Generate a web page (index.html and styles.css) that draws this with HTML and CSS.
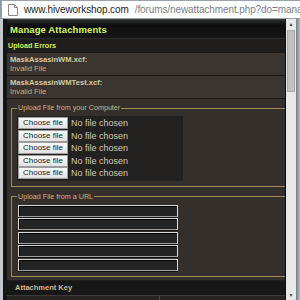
FILE: index.html
```html
<!DOCTYPE html>
<html lang="en">
<head>
    <meta charset="UTF-8">
    <title>Manage Attachments</title>
    <link rel="stylesheet" href="styles.css">
</head>
<body>
    <div class="urlbar">
        <svg class="page-icon" width="10" height="12" viewBox="0 0 10 12">
            <path d="M0.5 0.5h6l3 3v8h-9z" fill="#fff" stroke="#8a8a8a"/>
            <path d="M6.5 0.5v3h3" fill="none" stroke="#8a8a8a"/>
        </svg>
        <span class="host">www.hiveworkshop.com</span><span class="path">/forums/newattachment.php?do=manage</span>
    </div>

    <div class="viewport">
        <div class="frame-left"></div>
        <div class="page">
            <div class="panel">
                <div class="panel-head">Manage Attachments</div>
                <div class="subhead">Upload Errors</div>

                <div class="error-row">
                    <div class="file-name">MaskAssasinWM.xcf:</div>
                    <div class="file-error">Invalid File</div>
                </div>
                <div class="error-row">
                    <div class="file-name">MaskAssasinWMTest.xcf:</div>
                    <div class="file-error">Invalid File</div>
                </div>

                <div class="uploads">
                    <fieldset class="group">
                        <legend>Upload File from your Computer</legend>
                        <div class="file-box">
                            <div class="file-line"><span class="choose">Choose file</span><span class="none">No file chosen</span></div>
                            <div class="file-line"><span class="choose">Choose file</span><span class="none">No file chosen</span></div>
                            <div class="file-line"><span class="choose">Choose file</span><span class="none">No file chosen</span></div>
                            <div class="file-line"><span class="choose">Choose file</span><span class="none">No file chosen</span></div>
                            <div class="file-line"><span class="choose">Choose file</span><span class="none">No file chosen</span></div>
                        </div>
                    </fieldset>

                    <fieldset class="group">
                        <legend>Upload File from a URL</legend>
                        <div class="url-list">
                            <input type="text" class="url-input">
                            <input type="text" class="url-input">
                            <input type="text" class="url-input">
                            <input type="text" class="url-input">
                            <input type="text" class="url-input">
                        </div>
                    </fieldset>
                </div>

                <div class="key-head">Attachment Key</div>
                <div class="key-row">
                    <div class="key-cell">Thumbnail</div>
                    <div class="key-cell">Not Thumbnail</div>
                </div>
            </div>
        </div>
        <div class="scrollbar">
            <div class="arrow">&#9650;</div>
            <div class="track"><div class="thumb"></div></div>
            <div class="arrow">&#9660;</div>
        </div>
        <div class="frame-right"></div>
    </div>
</body>
</html>
```

FILE: styles.css
```css
/* Popup window frame */
body {
    margin: 0;
    width: 300px;
    height: 300px;
    overflow: hidden;
    background: #8d9aa6;
    font-family: "Liberation Sans", Arial, sans-serif;
}

/* Address bar */
.urlbar {
    height: 17px;
    margin-left: 1px;
    display: flex;
    align-items: center;
    gap: 6px;
    padding-left: 6px;
    background: #fff;
    border: 1px solid #9aa3ab;
    border-right: none;
    white-space: nowrap;
    overflow: hidden;
    font-size: 10px;
    letter-spacing: -0.1px;
}

.page-icon {
    flex: none;
}

.host {
    color: #222;
}

.path {
    color: #7d7d7d;
}

/* Content row with scrollbar */
.viewport {
    display: flex;
    height: 281px;
}

.frame-left {
    width: 3px;
    background: #c4c8cc;
}

.page {
    flex: 1;
    overflow: hidden;
    background: #151515;
    padding-left: 4px;
    border-right: 1px solid #0c0c0c;
}

.panel {
    width: 300px;
    background: #342f2b;
}

/* Panel titles */
.panel-head {
    height: 18px;
    padding-left: 3px;
    line-height: 19px;
    background: linear-gradient(#2a2a2a, #0e0e0e 30%, #161616);
    border-top: 1px solid #3c3c3c;
    color: #d6f26a;
    font-size: 9.5px;
    font-weight: bold;
    letter-spacing: 0.1px;
}

.subhead {
    height: 13px;
    padding-left: 1px;
    line-height: 13px;
    background: #1f1e1d;
    border-top: 1px solid #2c2c2c;
    color: #cdf05a;
    font-size: 7.2px;
    font-weight: bold;
}

/* Error rows */
.error-row {
    height: 20px;
    padding: 2px 3px 0;
    background: #3b3531;
    border-top: 1px solid #1c1a19;
    font-size: 7.6px;
    line-height: 9px;
}

.file-name {
    color: #d6c8a2;
    font-weight: bold;
}

.file-error {
    color: #d4aa66;
}

/* Upload fieldsets */
.uploads {
    padding: 4px 0 3px 4px;
    border-top: 1px solid #1c1a19;
    display: flex;
    flex-direction: column;
    gap: 5px;
}

.group {
    margin: 0;
    padding: 3px 0 5px 5px;
    border: 1px solid #a38a5a;
    border-right: none;
}

.group legend {
    padding: 0 1px;
    margin-left: 0;
    color: #c9b48a;
    font-size: 7.2px;
    line-height: 10px;
}

.file-box {
    width: 165px;
    padding: 1px 0 1px 1px;
    background: #232120;
    display: flex;
    flex-direction: column;
}

.file-line {
    display: flex;
    align-items: center;
    gap: 3px;
    height: 12.5px;
}

.choose {
    width: 48px;
    height: 10px;
    line-height: 10px;
    text-align: center;
    background: linear-gradient(#fafafa, #e2e2e2);
    border: 1px solid #9c9c9c;
    color: #1e1e1e;
    font-size: 8px;
}

.none {
    color: #d2c8b0;
    font-size: 9px;
}

.url-list {
    display: flex;
    flex-direction: column;
    gap: 1.5px;
    padding-left: 1px;
}

.url-input {
    width: 158px;
    height: 10px;
    margin: 0;
    padding: 0;
    background: #242424;
    border: 1px solid #d8d8d8;
    border-bottom-color: #a0a0a0;
    box-shadow: inset 1px 1px 0 #000, 0 1px 0 #111;
}

/* Attachment key */
.key-head {
    height: 14px;
    padding-left: 8px;
    line-height: 14px;
    background: #171717;
    border-top: 1px solid #1f1c1a;
    color: #cdb88e;
    font-size: 7.5px;
    font-weight: bold;
}

.key-row {
    display: flex;
    height: 20px;
    padding-left: 6px;
    background: #262321;
    border-top: 1px solid #3a3a3a;
}

.key-cell {
    width: 179px;
    padding: 3px 4px;
    border-right: 1px solid #4a4a4a;
    color: #d0c090;
    font-size: 8px;
    font-weight: bold;
}

/* Scrollbar */
.scrollbar {
    width: 10px;
    display: flex;
    flex-direction: column;
    background: #e9e9e9;
}

.arrow {
    height: 10px;
    line-height: 10px;
    text-align: center;
    color: #444;
    font-size: 5px;
}

.track {
    flex: 1;
}

.thumb {
    height: 60px;
    margin: 1px 1px 0;
    background: #c2c2c2;
    border: 1px solid #a8a8a8;
}

.frame-right {
    width: 4px;
    background: linear-gradient(90deg, #6f7d8a, #b5bec6);
}
```
